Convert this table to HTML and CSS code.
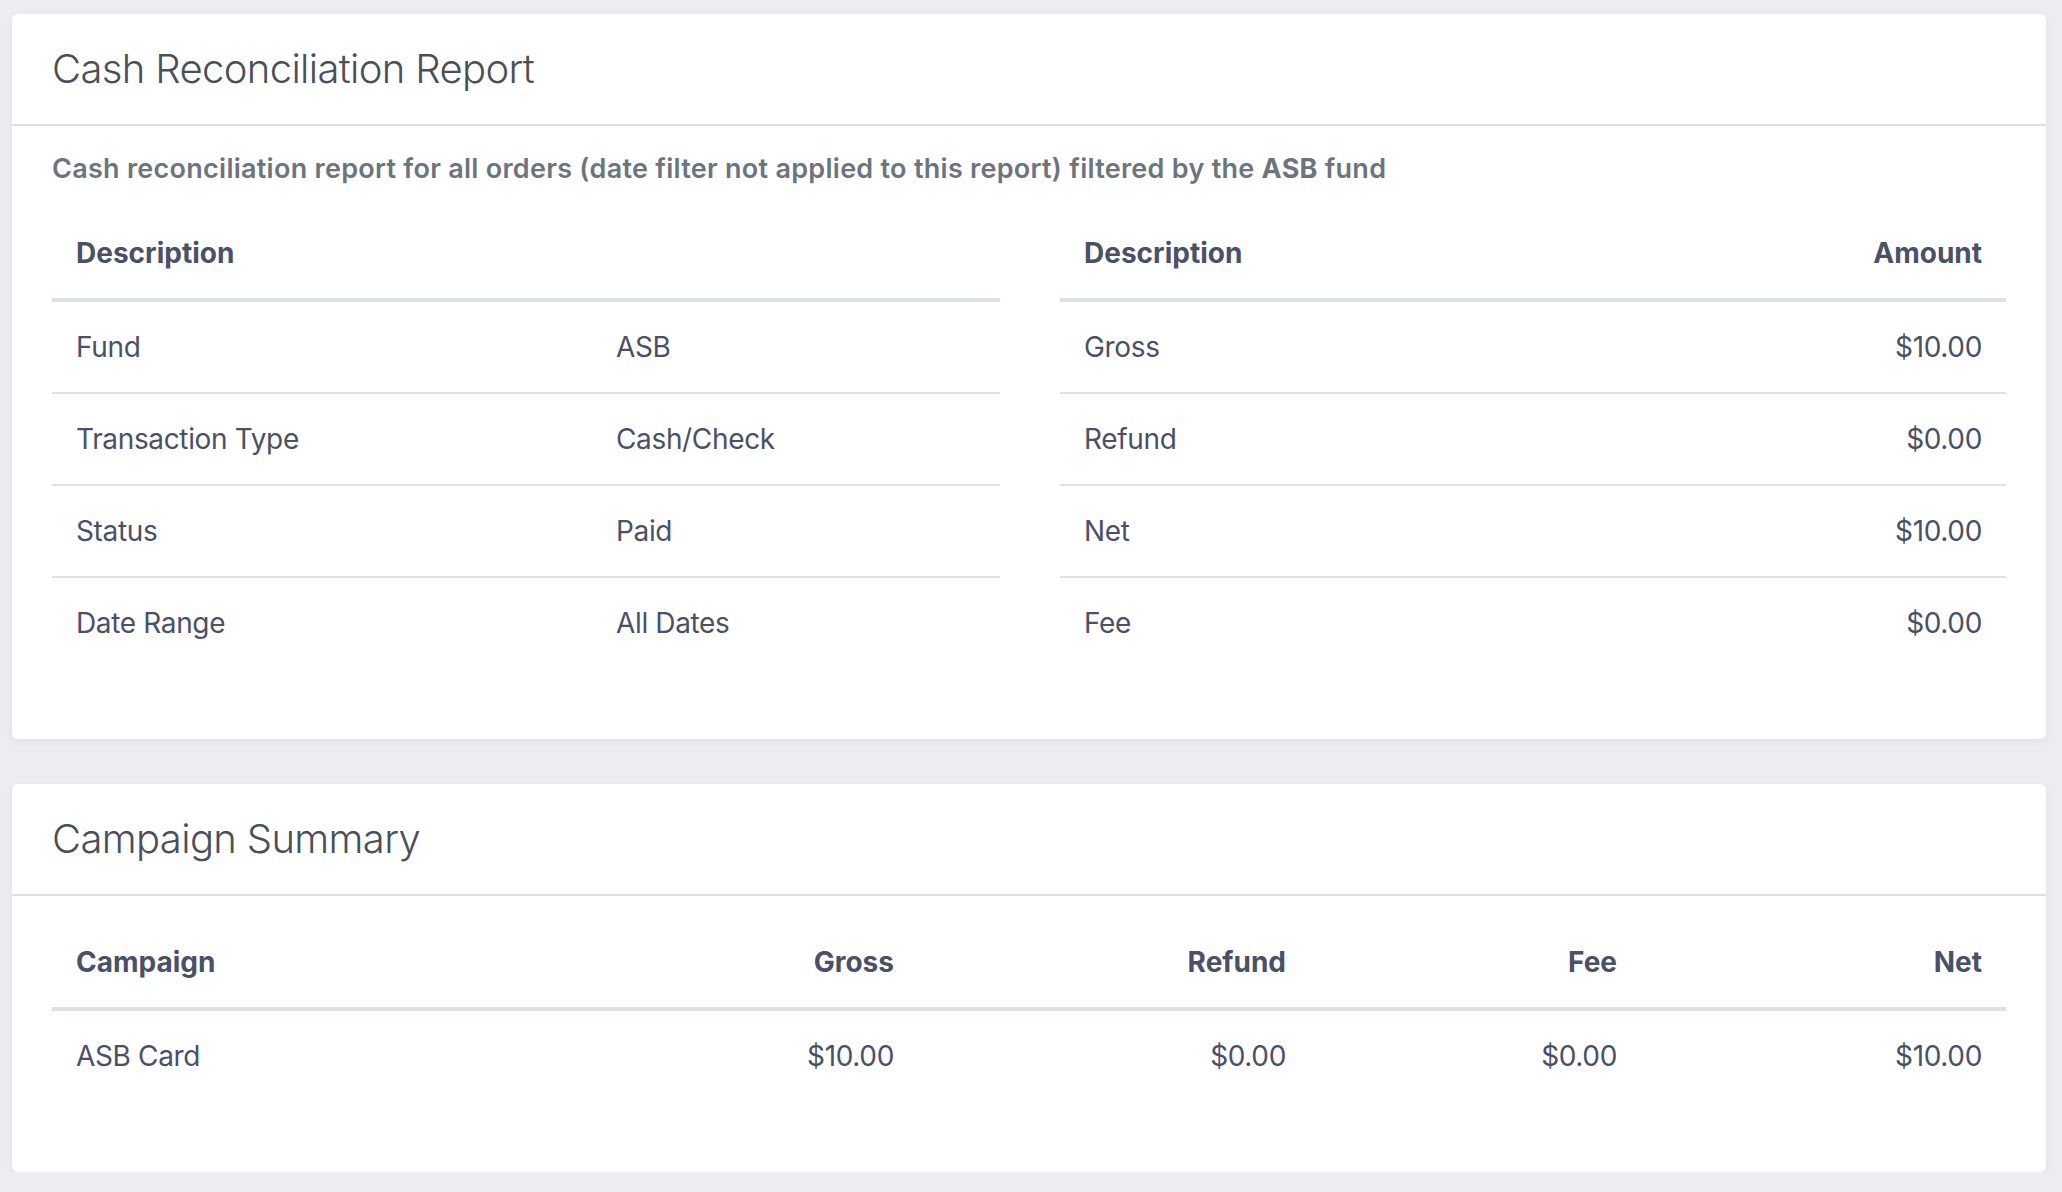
FILE: index.html
```html
<!DOCTYPE html>
<html lang="en">
<head>
<meta charset="utf-8">
<title>Cash Reconciliation Report</title>
<link rel="stylesheet" href="styles.css">
</head>
<body>
<div class="page">
  <section class="card">
    <header class="card-header"><h2 class="card-title">Cash Reconciliation Report</h2></header>
    <div class="card-body">
      <p class="note">Cash reconciliation report for all orders (date filter not applied to this report) filtered by the <b>ASB</b> fund</p>
      <div class="cols">
        <table class="tbl tbl-info">
          <thead>
            <tr><th class="c-label">Description</th><th></th></tr>
          </thead>
          <tbody>
            <tr><td>Fund</td><td>ASB</td></tr>
            <tr><td>Transaction Type</td><td>Cash/Check</td></tr>
            <tr><td>Status</td><td>Paid</td></tr>
            <tr><td>Date Range</td><td>All Dates</td></tr>
          </tbody>
        </table>
        <table class="tbl">
          <thead>
            <tr><th>Description</th><th class="r">Amount</th></tr>
          </thead>
          <tbody>
            <tr><td>Gross</td><td class="r">$10.00</td></tr>
            <tr><td>Refund</td><td class="r">$0.00</td></tr>
            <tr><td>Net</td><td class="r">$10.00</td></tr>
            <tr><td>Fee</td><td class="r">$0.00</td></tr>
          </tbody>
        </table>
      </div>
    </div>
  </section>

  <section class="card">
    <header class="card-header"><h2 class="card-title">Campaign Summary</h2></header>
    <div class="card-body">
      <table class="tbl tbl-campaign">
        <thead>
          <tr>
            <th class="w-camp">Campaign</th>
            <th class="r w-gross">Gross</th>
            <th class="r w-refund">Refund</th>
            <th class="r w-fee">Fee</th>
            <th class="r">Net</th>
          </tr>
        </thead>
        <tbody>
          <tr>
            <td>ASB Card</td>
            <td class="r">$10.00</td>
            <td class="r">$0.00</td>
            <td class="r">$0.00</td>
            <td class="r">$10.00</td>
          </tr>
        </tbody>
      </table>
    </div>
  </section>
</div>
</body>
</html>
```

FILE: styles.css
```css
* { box-sizing: border-box; }

html, body {
  margin: 0;
  padding: 0;
  background: #ecedf1;
}

body {
  font-family: Inter, "Noto Sans", "Liberation Sans", sans-serif;
  color: #4a5166;
}

.page {
  padding: 14px 16px 0 12px;
  display: flex;
  flex-direction: column;
  gap: 45px;
}

.card {
  background: #fff;
  border-radius: 6px;
  box-shadow: 0 3px 8px rgba(0, 0, 0, 0.05);
}

.card-header {
  height: 112px;
  padding: 0 40px;
  display: flex;
  align-items: center;
  border-bottom: 2px solid #dfdfdf;
}

.card-title {
  margin: 0;
  font-size: 40px;
  line-height: 48px;
  font-weight: 300;
  color: #495057;
  letter-spacing: -0.65px;
}

.card-body {
  padding: 21px 40px 71px;
}

.note {
  margin: 2px 0 20px;
  font-size: 27px;
  line-height: 39px;
  font-weight: 600;
  color: #6c757d;
  letter-spacing: 0.27px;
}

.note b { font-weight: 700; }

.cols {
  display: grid;
  grid-template-columns: 948px 946px;
  column-gap: 60px;
}

.tbl {
  width: 100%;
  border-collapse: separate;
  border-spacing: 0;
  font-size: 28px;
  line-height: 42px;
}

.tbl th,
.tbl td {
  padding: 24px;
  text-align: left;
  vertical-align: top;
  white-space: nowrap;
}

.tbl th {
  font-weight: 700;
  border-bottom: 4px solid #dee2e6;
}

.tbl td {
  font-weight: 400;
  letter-spacing: -0.35px;
  border-bottom: 2px solid #dee2e6;
}

.tbl tbody tr:last-child td { border-bottom: none; }

.tbl .r { text-align: right; }

.tbl-info .c-label { width: 540px; }

.w-camp { width: 500px; }
.w-gross { width: 366px; }
.w-refund { width: 392px; }
.w-fee { width: 331px; }
```
